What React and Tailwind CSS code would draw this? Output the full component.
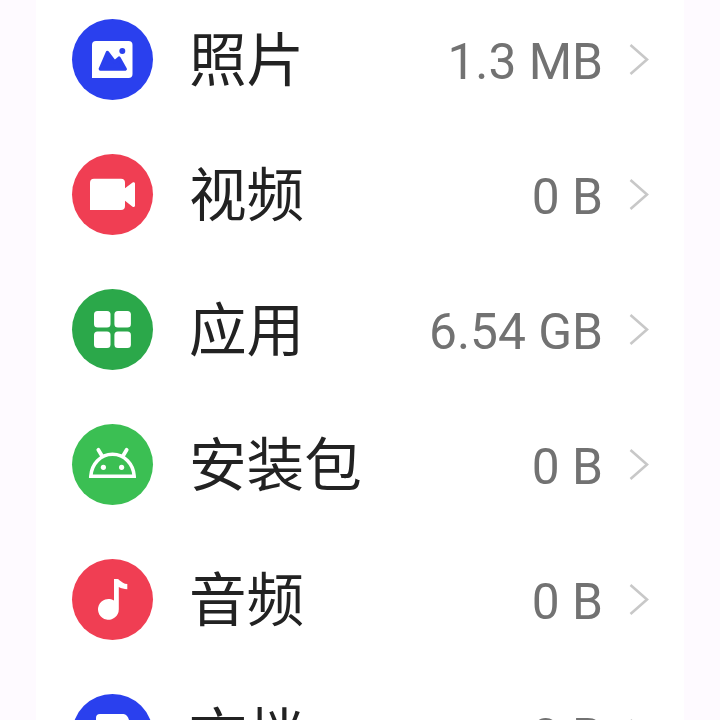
const PhotoIcon = () => (
  <>
    <path
      fill="#fff"
      d="M24 22h32.5a4 4 0 0 1 4 4v29a4 4 0 0 1-4 4H20V26a4 4 0 0 1 4-4z"
    />
    <path
      fill="#2a40ee"
      stroke="#2a40ee"
      strokeWidth="3.5"
      strokeLinejoin="round"
      d="M28.4 50L35.4 33.6L42.6 43L47 39.2L53.2 50z"
    />
    <circle cx="50.3" cy="32" r="3" fill="#2a40ee" />
  </>
);

const VideoIcon = () => (
  <path
    fill="#fff"
    d="M22 24.7h27a4 4 0 0 1 4 4v5.6l7.6-5.8c1.1-.7 2.4-.2 2.4 1.2v21.8c0 1.4-1.3 1.9-2.4 1.2L53 46.7V52a4 4 0 0 1-4 4H18V28.7a4 4 0 0 1 4-4z"
  />
);

const AppsIcon = () => (
  <g fill="#fff">
    <rect x="22" y="22" width="16.5" height="16.5" rx="3.5" />
    <rect x="42.4" y="22" width="16.5" height="16.5" rx="3.5" />
    <rect x="22" y="42.4" width="16.5" height="16.5" rx="3.5" />
    <rect x="42.4" y="42.4" width="16.5" height="16.5" rx="3.5" />
  </g>
);

const AndroidIcon = () => (
  <>
    <path
      fill="none"
      stroke="#fff"
      strokeWidth="3.5"
      d="M18.8 52.2C19.5 40 28.5 30.3 40.5 30.3S61.5 40 62.2 52.2z"
    />
    <path
      stroke="#fff"
      strokeWidth="3.8"
      strokeLinecap="round"
      d="M26.3 25.8L29.9 31.8M54.7 25.8L51.1 31.8"
    />
    <circle cx="31.4" cy="43.3" r="2.6" fill="#fff" />
    <circle cx="49.6" cy="43.3" r="2.6" fill="#fff" />
  </>
);

const MusicIcon = () => (
  <path
    fill="#fff"
    d="M42 20h3.5c1.2 0 1.4 1 2.2 1.4c1.8 1.4 4.4 3.4 7.6 3.6v5.2c-3.2 0-6-.9-8.5-2.2v22.3A10.4 10.4 0 1 1 42 41.6z"
  />
);

const DocIcon = () => (
  <path
    fill="#fff"
    d="M28 20h23.5c2.5 0 4.5 2.5 5.5 6V57a4 4 0 0 1-4 4H28a4 4 0 0 1-4-4V24a4 4 0 0 1 4-4z"
  />
);

const categories = [
  { label: "照片", size: "1.3 MB", color: "bg-[#2a40ee]", Icon: PhotoIcon },
  { label: "视频", size: "0 B", color: "bg-[#f03e53]", Icon: VideoIcon },
  { label: "应用", size: "6.54 GB", color: "bg-[#2ba84a]", Icon: AppsIcon },
  { label: "安装包", size: "0 B", color: "bg-[#3bbf53]", Icon: AndroidIcon },
  { label: "音频", size: "0 B", color: "bg-[#f03e53]", Icon: MusicIcon },
  { label: "文档", size: "0 B", color: "bg-[#2a40ee]", Icon: DocIcon },
];

const CategoryRow = ({ label, size, color, Icon }) => (
  <li className="flex h-[135px] shrink-0 items-center pl-9 pr-[35px]">
    <span className={`size-[81px] shrink-0 rounded-full ${color}`}>
      <svg viewBox="0 0 81 81" className="size-full">
        <Icon />
      </svg>
    </span>
    <span className="ml-9 pb-1.5 font-['Noto_Sans_CJK_SC',sans-serif] text-[57.6px] leading-none text-[#222]">
      {label}
    </span>
    <span className="ml-auto pt-1.5 font-[Roboto,sans-serif] text-[49.7px] leading-none text-[#727272]">
      {size}
    </span>
    <svg viewBox="0 0 20 32" className="mb-px ml-[26px] h-8 w-5" fill="none">
      <path d="M1.5 2L18 16.5L1.5 31" stroke="#c8c8c8" strokeWidth="2.6" />
    </svg>
  </li>
);

const App = () => {
  return (
    <div className="h-screen overflow-hidden bg-[#fefaff] px-9">
      <ul className="-mt-2 flex h-[728px] flex-col overflow-hidden bg-white">
        {categories.map((item) => (
          <CategoryRow key={item.label} {...item} />
        ))}
      </ul>
    </div>
  );
};

export default App;
